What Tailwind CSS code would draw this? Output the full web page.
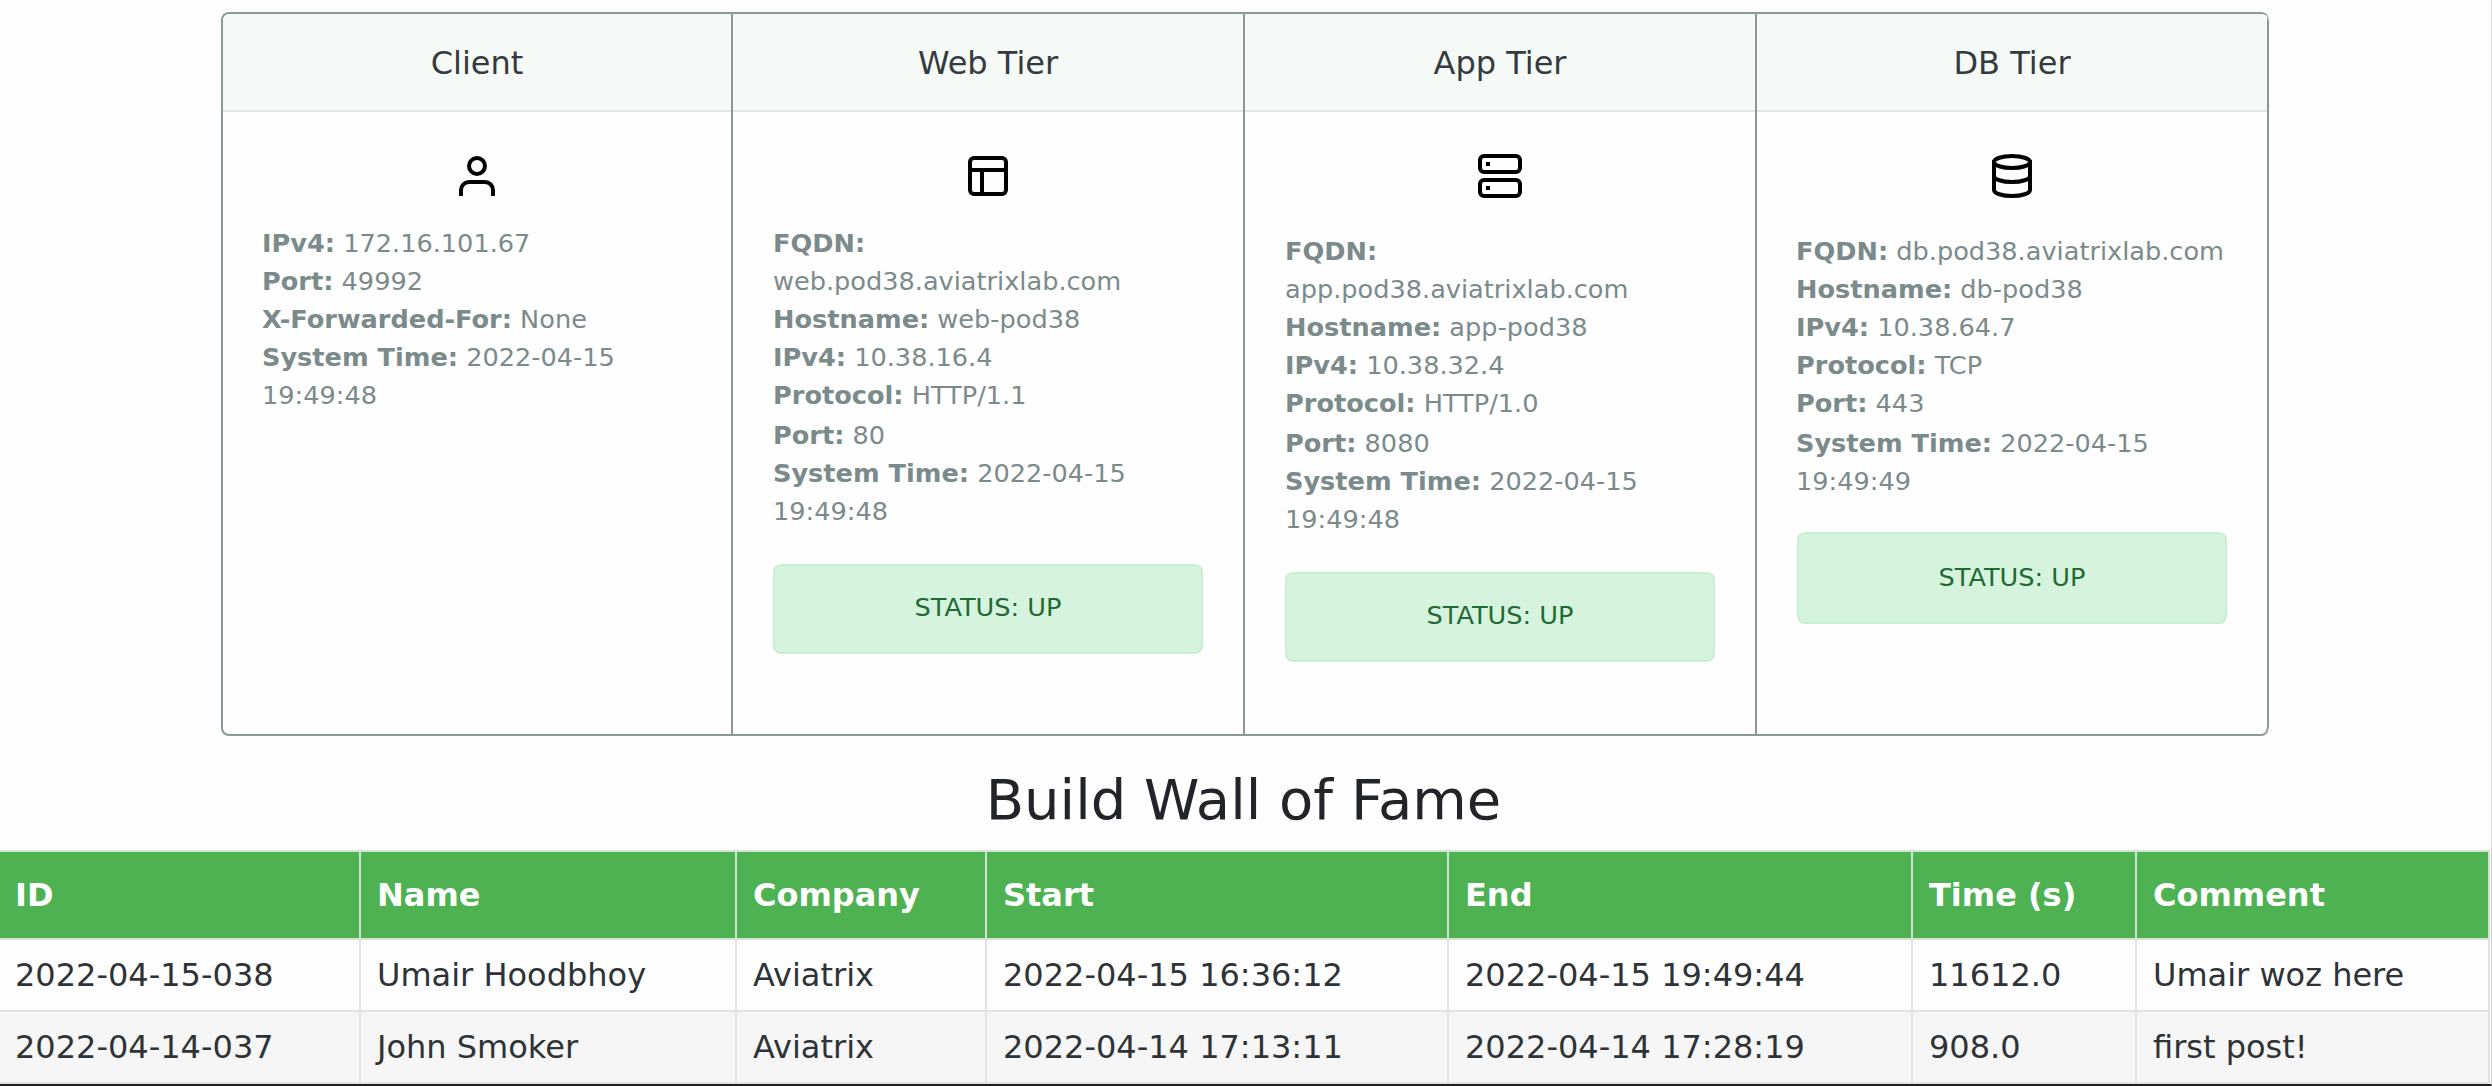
<!DOCTYPE html>
<html lang="en">
<head>
<meta charset="utf-8">
<title>Build Wall of Fame</title>
<script src="https://cdn.jsdelivr.net/npm/@tailwindcss/browser@4"></script>
</head>
<body class="h-[1086px] overflow-hidden bg-[#fefefe] font-['DejaVu_Sans',sans-serif] text-[32px] leading-[48px] text-[#212529]">
<main class="flex h-[1086px] flex-col border-r border-b-2 border-r-[#d2d5d5] border-b-[#1c1e20] pt-3">
  <section class="ml-[221px] grid h-[724px] w-[2048px] grid-cols-[510px_512px_512px_512px] overflow-hidden rounded-lg border-2 border-r-0 border-[#8b9798] text-[25.6px] leading-[38px] text-[#7b8a8b]">
    <article class="border-r-2 border-[#8b9798]">
      <h2 class="border-b-2 border-[#e2e6e4] bg-[#f6faf7] pt-[25px] pb-[23px] text-center text-[32px] leading-[48px] text-[#343a3f]">Client</h2>
      <div class="px-10 pt-10">
        <svg class="mx-auto block size-12" viewBox="0 0 24 24" fill="none" stroke="#000" stroke-width="2" stroke-linecap="square" stroke-linejoin="round"><path d="M20 21v-2a4 4 0 0 0-4-4H8a4 4 0 0 0-4 4v2"/><circle cx="12" cy="7" r="4"/></svg>
        <div class="-ml-px mt-6">
          <p><b>IPv4:</b> 172.16.101.67</p>
          <p><b>Port:</b> 49992</p>
          <p><b>X-Forwarded-For:</b> None</p>
          <p><b>System Time:</b> 2022-04-15<br>19:49:48</p>
        </div>
      </div>
    </article>
    <article class="border-r-2 border-[#8b9798]">
      <h2 class="border-b-2 border-[#e2e6e4] bg-[#f6faf7] pt-[25px] pb-[23px] text-center text-[32px] leading-[48px] text-[#343a3f]">Web Tier</h2>
      <div class="px-10 pt-10">
        <svg class="mx-auto block size-12" viewBox="0 0 24 24" fill="none" stroke="#000" stroke-width="2" stroke-linecap="square" stroke-linejoin="round"><rect x="3" y="3" width="18" height="18" rx="2"/><path d="M3 9h18M9 21V9"/></svg>
        <div class="mt-6">
          <p><b>FQDN:</b><br>web.pod38.aviatrixlab.com</p>
          <p><b>Hostname:</b> web-pod38</p>
          <p><b>IPv4:</b> 10.38.16.4</p>
          <p><b>Protocol:</b> HTTP/1.1</p>
          <p class="mt-0.5"><b>Port:</b> 80</p>
          <p><b>System Time:</b> 2022-04-15<br>19:49:48</p>
        </div>
        <div class="mt-[34px] rounded-lg border-2 border-[#c9efd2] bg-[#d6f3dd] pt-[22px] pb-[26px] text-center text-[#1e6b36]">STATUS: UP</div>
      </div>
    </article>
    <article class="border-r-2 border-[#8b9798]">
      <h2 class="border-b-2 border-[#e2e6e4] bg-[#f6faf7] pt-[25px] pb-[23px] text-center text-[32px] leading-[48px] text-[#343a3f]">App Tier</h2>
      <div class="px-10 pt-10">
        <svg class="mx-auto block size-12" viewBox="0 0 24 24" fill="none" stroke="#000" stroke-width="2" stroke-linecap="square" stroke-linejoin="round"><rect x="2" y="2" width="20" height="8" rx="2"/><rect x="2" y="14" width="20" height="8" rx="2"/><path d="M6 6h.01M6 18h.01"/></svg>
        <div class="mt-8">
          <p><b>FQDN:</b><br>app.pod38.aviatrixlab.com</p>
          <p><b>Hostname:</b> app-pod38</p>
          <p><b>IPv4:</b> 10.38.32.4</p>
          <p><b>Protocol:</b> HTTP/1.0</p>
          <p class="mt-0.5"><b>Port:</b> 8080</p>
          <p><b>System Time:</b> 2022-04-15<br>19:49:48</p>
        </div>
        <div class="mt-[34px] rounded-lg border-2 border-[#c9efd2] bg-[#d6f3dd] pt-[22px] pb-[26px] text-center text-[#1e6b36]">STATUS: UP</div>
      </div>
    </article>
    <article class="rounded-r-lg border-r-2 border-[#8b9798]">
      <h2 class="border-b-2 border-[#e2e6e4] bg-[#f6faf7] pt-[25px] pb-[23px] text-center text-[32px] leading-[48px] text-[#343a3f]">DB Tier</h2>
      <div class="px-10 pt-10">
        <svg class="mx-auto block size-12" viewBox="0 0 24 24" fill="none" stroke="#000" stroke-width="2" stroke-linecap="square" stroke-linejoin="round"><ellipse cx="12" cy="5" rx="9" ry="3"/><path d="M21 12c0 1.66-4 3-9 3s-9-1.34-9-3"/><path d="M3 5v14c0 1.66 4 3 9 3s9-1.34 9-3V5"/></svg>
        <div class="-ml-px mt-8 whitespace-nowrap">
          <p><b>FQDN:</b> db.pod38.aviatrixlab.com</p>
          <p><b>Hostname:</b> db-pod38</p>
          <p><b>IPv4:</b> 10.38.64.7</p>
          <p><b>Protocol:</b> TCP</p>
          <p><b>Port:</b> 443</p>
          <p class="mt-0.5"><b>System Time:</b> 2022-04-15<br>19:49:49</p>
        </div>
        <div class="mt-8 rounded-lg border-2 border-[#c9efd2] bg-[#d6f3dd] pt-6 pb-[26px] text-center text-[#1e6b36]">STATUS: UP</div>
      </div>
    </article>
  </section>
  <h1 class="mt-[30px] h-[84px] pr-1 text-center text-[56px] leading-[67px]">Build Wall of Fame</h1>
  <table class="-ml-[3px] w-[2493px] table-fixed border-collapse text-left">
    <colgroup><col class="w-[362px]"><col class="w-[376px]"><col class="w-[250px]"><col class="w-[462px]"><col class="w-[464px]"><col class="w-[224px]"><col></colgroup>
    <thead>
      <tr class="h-[88px] bg-[#4eb253] text-white">
        <th class="border-2 border-[#d4e2d4] px-4 py-0">ID</th><th class="border-2 border-[#d4e2d4] px-4 py-0">Name</th><th class="border-2 border-[#d4e2d4] px-4 py-0">Company</th><th class="border-2 border-[#d4e2d4] px-4 py-0">Start</th><th class="border-2 border-[#d4e2d4] px-4 py-0">End</th><th class="border-2 border-[#d4e2d4] px-4 py-0">Time (s)</th><th class="border-2 border-[#d4e2d4] px-4 py-0">Comment</th>
      </tr>
    </thead>
    <tbody class="text-[#2e3337]">
      <tr class="h-[72px]">
        <td class="border-2 border-[#e2e4e2] px-4 py-0">2022-04-15-038</td><td class="border-2 border-[#e2e4e2] px-4 py-0">Umair Hoodbhoy</td><td class="border-2 border-[#e2e4e2] px-4 py-0">Aviatrix</td><td class="border-2 border-[#e2e4e2] px-4 py-0">2022-04-15 16:36:12</td><td class="border-2 border-[#e2e4e2] px-4 py-0">2022-04-15 19:49:44</td><td class="border-2 border-[#e2e4e2] px-4 py-0">11612.0</td><td class="border-2 border-[#e2e4e2] px-4 py-0">Umair woz here</td>
      </tr>
      <tr class="h-[72px] bg-[#f6f6f6]">
        <td class="border-2 border-[#e2e4e2] px-4 py-0">2022-04-14-037</td><td class="border-2 border-[#e2e4e2] px-4 py-0">John Smoker</td><td class="border-2 border-[#e2e4e2] px-4 py-0">Aviatrix</td><td class="border-2 border-[#e2e4e2] px-4 py-0">2022-04-14 17:13:11</td><td class="border-2 border-[#e2e4e2] px-4 py-0">2022-04-14 17:28:19</td><td class="border-2 border-[#e2e4e2] px-4 py-0">908.0</td><td class="border-2 border-[#e2e4e2] px-4 py-0">first post!</td>
      </tr>
    </tbody>
  </table>
</main>
</body>
</html>
